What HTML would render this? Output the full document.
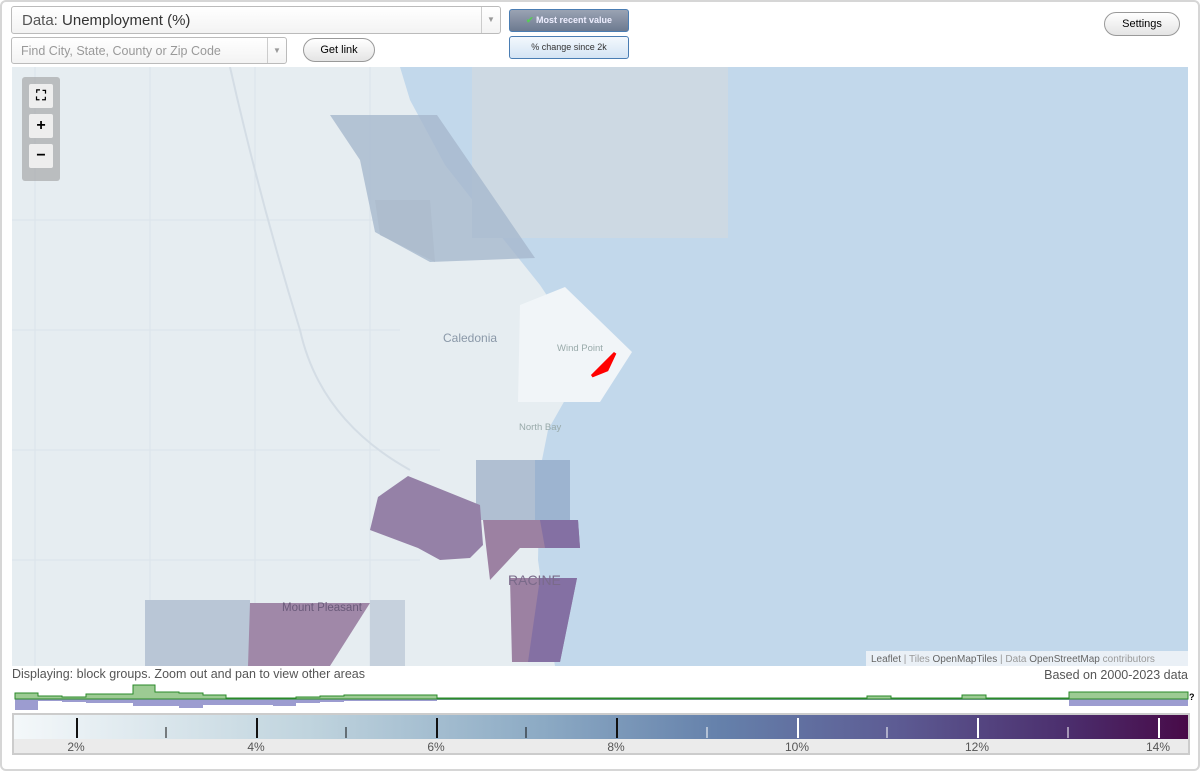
<!DOCTYPE html>
<html><head><meta charset="utf-8"><style>
body{margin:0;width:1200px;height:771px;background:#fff;font-family:"Liberation Sans",sans-serif;position:relative;overflow:hidden}
.frame{position:absolute;left:0;top:0;width:1196px;height:767px;border:2px solid #d6d6d6;border-radius:6px}
.sel{position:absolute;border:1px solid #bbb;border-radius:3px;background:linear-gradient(#fff,#f3f3f3);box-sizing:border-box}
.arrow{position:absolute;right:0;top:0;bottom:0;width:18px;border-left:1px solid #ccc;color:#999;font-size:8px;text-align:center}
.btn{position:absolute;border:1px solid #999;border-radius:12px;background:linear-gradient(#fff,#e4e4e4);font-size:11px;text-align:center;box-sizing:border-box}
.tg{position:absolute;border:1px solid #4a7db3;border-radius:3px;box-sizing:border-box;font-size:9px;text-align:center}
.zb{position:absolute;left:29px;width:24px;height:24px;background:#eee;border-radius:2px;text-align:center;font-weight:bold;font-size:16px;line-height:23px}
</style></head><body>
<div class="frame"></div>
<div class="sel" style="left:11px;top:6px;width:490px;height:28px;font-size:15px;padding:5px 10px;color:#555">Data: <span style="color:#333">Unemployment (%)</span><div class="arrow" style="line-height:26px">▼</div></div>
<div class="sel" style="left:11px;top:37px;width:276px;height:27px;font-size:12.5px;padding:6px 9px;color:#999">Find City, State, County or Zip Code<div class="arrow" style="line-height:25px">▼</div></div>
<div class="btn" style="left:303px;top:38px;width:72px;height:24px;line-height:22px">Get link</div>
<div class="tg" style="left:509px;top:9px;width:120px;height:23px;background:linear-gradient(#9aa3b3,#6d7a90);color:#eef;font-weight:bold;line-height:20px"><span style="color:#5c5">✔</span> Most recent value</div>
<div class="tg" style="left:509px;top:36px;width:120px;height:23px;background:linear-gradient(#f3f8fd,#d4e4f4);color:#333;line-height:21px">% change since 2k</div>
<div class="btn" style="left:1104px;top:12px;width:76px;height:24px;line-height:22px">Settings</div>

<svg style="position:absolute;left:12px;top:67px" width="1176" height="599" viewBox="12 67 1176 599">
<rect x="12" y="67" width="1176" height="599" fill="#e6edf1"/>
<g stroke="#dbe4ea" stroke-width="1" fill="none">
<path d="M35 67 V666 M150 67 V666 M255 67 V666 M370 67 V666 M12 220 H400 M12 330 H400 M12 450 H440 M12 560 H420"/>
<path d="M230 67 Q260 200 300 330 Q320 420 410 470" stroke="#d4dde5" stroke-width="2"/>
</g>
<path d="M400 67 L410 100 L445 165 L500 235 L540 285 L570 330 L585 370 L565 400 L548 430 L540 470 L538 560 L545 610 L555 666 L1188 666 L1188 67Z" fill="#c2d8eb"/>
<rect x="472" y="67" width="256" height="171" fill="#cdd9e3"/>
<path d="M330 115 L437 115 L535 258 L430 262 L375 232 L360 160Z" fill="#a6b8cd" opacity=".8"/>
<path d="M375 200 L430 200 L435 262 L380 235Z" fill="#aebdce"/>
<path d="M520 305 L565 287 L632 352 L600 402 L518 402Z" fill="#f1f5f8"/>
<path d="M592 376 L615 353 L607 370 Z" fill="#f00" stroke="#f00" stroke-width="3"/>
<rect x="476" y="460" width="94" height="60" fill="#b0bfd2"/>
<rect x="535" y="460" width="35" height="60" fill="#9db4d0"/>
<path d="M370 530 L378 497 L408 476 L480 505 L483 545 L470 558 L440 560 L418 548Z" fill="#9581a7"/>
<path d="M483 520 L578 520 L580 548 L520 548 L490 580Z" fill="#9c81a2"/>
<path d="M540 520 L578 520 L580 548 L545 548Z" fill="#8470a3"/>
<path d="M510 578 L577 578 L560 662 L512 662Z" fill="#9c81a2"/>
<path d="M540 578 L577 578 L560 662 L528 662Z" fill="#8470a3"/>
<rect x="145" y="600" width="105" height="66" fill="#b9c6d6"/>
<path d="M250 603 L370 603 L330 666 L248 666Z" fill="#a088a8"/>
<rect x="370" y="600" width="35" height="66" fill="#c6d1dd"/>
<text x="443" y="342" font-size="12" fill="#8a98a8">Caledonia</text>
<text x="557" y="351" font-size="9.5" fill="#9aa">Wind Point</text>
<text x="519" y="430" font-size="9.5" fill="#9aa">North Bay</text>
<text x="508" y="585" font-size="14" fill="#7a6a8a">RACINE</text>
<text x="282" y="611" font-size="11.5" fill="#6a5a7a">Mount Pleasant</text>
<rect x="866" y="651" width="322" height="15" fill="#eef3f7" opacity=".9"/>
<text x="871" y="662" font-size="10" fill="#999"><tspan fill="#666">Leaflet</tspan> | Tiles <tspan fill="#666">OpenMapTiles</tspan> | Data <tspan fill="#666">OpenStreetMap</tspan> contributors</text>
</svg>
<div style="position:absolute;left:22px;top:77px;width:38px;height:104px;background:rgba(150,150,150,.55);border-radius:3px"></div>
<div class="zb" style="top:84px;font-size:14px">⛶</div>
<div class="zb" style="top:114px">+</div>
<div class="zb" style="top:144px">−</div>
<div style="position:absolute;left:12px;top:667px;font-size:12.5px;color:#555">Displaying: block groups. Zoom out and pan to view other areas</div>
<div style="position:absolute;right:12px;top:668px;font-size:12.5px;color:#555">Based on 2000-2023 data</div>
<svg style="position:absolute;left:0;top:680px" width="1200" height="34" viewBox="0 680 1200 34">
<path d="M15 699 V710 H38 V701 H62 V702 H86 V703 H133 V706 H179 V708 H203 V705 H226 V705 H273 V706 H296 V703 H320 V702 H344 V701 H437 V700 H1069 V706 H1188 V699 Z" fill="#9c9cd0"/>
<path d="M15 699 V693 H38 V696 H62 V697 H86 V694 H133 V685 H155 V692 H179 V693 H203 V695 H226 V698 H296 V697 H320 V696 H344 V695 H437 V698 H867 V696 H891 V698 H962 V695 H986 V698 H1069 V692 H1188 V699 Z" fill="#9ccb93" stroke="#2a8a2a" stroke-width="1"/>
<text x="1189" y="700" font-size="9" font-weight="bold">?</text>
</svg>
<div style="position:absolute;left:12px;top:713px;width:1178px;height:42px;border:2px solid #ccc;box-sizing:border-box;background:#ebebeb">
<div style="position:absolute;left:0;top:0;right:0;height:24px;background:linear-gradient(90deg,#f4f8fa,#c0d4de 25%,#8caac4 45%,#6581ab 60%,#5d5c94 75%,#4b2d6c 90%,#480a48)"></div>
</div>
<svg style="position:absolute;left:12px;top:713px" width="1178" height="42">
<g stroke-width="2">
<line x1="65" y1="5" x2="65" y2="25" stroke="#111"/><line x1="245" y1="5" x2="245" y2="25" stroke="#111"/><line x1="425" y1="5" x2="425" y2="25" stroke="#111"/><line x1="605" y1="5" x2="605" y2="25" stroke="#111"/>
<line x1="786" y1="5" x2="786" y2="25" stroke="#fff"/><line x1="966" y1="5" x2="966" y2="25" stroke="#fff"/><line x1="1147" y1="5" x2="1147" y2="25" stroke="#fff"/>
</g><g stroke-width="1">
<line x1="154" y1="14" x2="154" y2="25" stroke="#111"/><line x1="334" y1="14" x2="334" y2="25" stroke="#111"/><line x1="514" y1="14" x2="514" y2="25" stroke="#111"/>
<line x1="695" y1="14" x2="695" y2="25" stroke="#fff"/><line x1="875" y1="14" x2="875" y2="25" stroke="#fff"/><line x1="1056" y1="14" x2="1056" y2="25" stroke="#fff"/>
</g>
<g font-size="12" fill="#555" text-anchor="middle"><text x="64" y="38">2%</text><text x="244" y="38">4%</text><text x="424" y="38">6%</text><text x="604" y="38">8%</text><text x="785" y="38">10%</text><text x="965" y="38">12%</text><text x="1146" y="38">14%</text></g>
</svg>
</body></html>
